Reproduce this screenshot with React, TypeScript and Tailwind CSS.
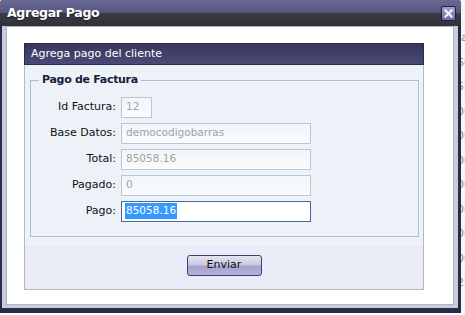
import React from 'react';

const font = { fontFamily: '"DejaVu Sans", Verdana, sans-serif' };

function ReadonlyField({ value, width }: { value: string; width: string }) {
  return (
    <div
      className={`${width} h-[21px] border border-[#b9c8d8] bg-[linear-gradient(to_bottom,#f2f5f8,#fafbfd)] px-[4px] flex items-center text-[10.5px] text-[#a3a3a3]`}
    >
      {value}
    </div>
  );
}

function Row({ label, children }: { label: string; children: React.ReactNode }) {
  return (
    <div className="flex items-center gap-[5px] h-[21px]">
      <div className="w-[84px] text-right text-[11px] text-[#111]">{label}</div>
      {children}
    </div>
  );
}

export default function App() {
  return (
    <div className="w-[465px] h-[315px] bg-white flex overflow-hidden" style={font}>
      {/* Dialog window */}
      <div className="w-[461px] h-[313px] flex flex-col bg-[#2a2a4e] rounded-t-[3px] overflow-hidden">
        {/* Title bar */}
        <div className="h-[26px] shrink-0 flex items-center justify-between pl-[7px] pr-[5px] bg-[linear-gradient(to_bottom,#6a6a96_0%,#55557f_50%,#3b3b44_52%,#313139_100%)]">
          <span className="text-white font-bold text-[12.5px] tracking-[-0.3px] [text-shadow:0_1px_1px_#1a1a2a]">
            Agregar Pago
          </span>
          <div className="w-[15px] h-[15px] rounded-[2px] border border-[#1f1f45] bg-[linear-gradient(to_bottom,#a2a2cc,#6c6ca2)] flex items-center justify-center">
            <svg width="9" height="9" viewBox="0 0 9 9">
              <path d="M1.5 1.5 L7.5 7.5 M7.5 1.5 L1.5 7.5" stroke="#f4f4fa" strokeWidth="2.2" strokeLinecap="square" />
            </svg>
          </div>
        </div>

        {/* Window body frame */}
        <div className="flex-1 flex flex-col pl-[2px] pr-[3px] pb-[5px]">
          <div className="flex-1 bg-[#c9cdd9] pl-[4px] pr-[4px] pb-[3px] flex">
            <div className="flex-1 bg-white border border-[#b0b4c2] pl-[17px] pt-[16px]">
              {/* Inner panel */}
              <div className="w-[400px] flex flex-col">
                <div className="h-[22px] flex items-center pl-[6px] bg-[linear-gradient(to_bottom,#36365e,#4a4a76)] border border-[#2a2a50] text-white text-[11px]">
                  Agrega pago del cliente
                </div>
                <div className="bg-[#edf1f8] border border-t-0 border-[#b3b7c7] flex flex-col">
                  <div className="pl-[5px] pr-[4px] pt-[7px] pb-[9px]">
                    <fieldset className="border border-[#b3bccd] px-[1px] pb-[14px]">
                      <legend className="ml-[7px] px-[3px] text-[11px] font-bold tracking-[-0.3px] text-[#15203a]">
                        Pago de Factura
                      </legend>
                      <div className="flex flex-col gap-[5px] pt-[8px]">
                        <Row label="Id Factura:">
                          <ReadonlyField value="12" width="w-[31px]" />
                        </Row>
                        <Row label="Base Datos:">
                          <ReadonlyField value="democodigobarras" width="w-[190px]" />
                        </Row>
                        <Row label="Total:">
                          <ReadonlyField value="85058.16" width="w-[190px]" />
                        </Row>
                        <Row label="Pagado:">
                          <ReadonlyField value="0" width="w-[190px]" />
                        </Row>
                        <Row label="Pago:">
                          <div className="w-[190px] h-[21px] border border-[#46699a] bg-white px-[3px] flex items-center text-[10.5px]">
                            <span className="bg-[#3399ff] text-white px-[1px]">85058.16</span>
                          </div>
                        </Row>
                      </div>
                    </fieldset>
                  </div>
                  <div className="bg-[#e9ecf6] flex justify-center pt-[9px] pb-[13px]">
                    <button className="w-[75px] h-[21px] rounded-[3px] border border-[#3f3f72] bg-[linear-gradient(to_bottom,#e6e6f2_0%,#c8c8e0_45%,#a4a4cc_55%,#b4b4d8_100%)] text-[11px] text-[#111]">
                      Enviar
                    </button>
                  </div>
                </div>
              </div>
            </div>
          </div>
        </div>
      </div>

      {/* Background list peeking out at right */}
      <div className="w-[4px] h-[315px] bg-[#f6f6f6] overflow-hidden flex flex-col pt-[30px] gap-[8px] text-[11px] text-[#8a8a8a]">
        <div className="-ml-[4px]">ta</div>
        <div className="-ml-[4px]">66</div>
        <div className="-ml-[4px]">55</div>
        <div className="-ml-[4px]">00</div>
        <div className="-ml-[4px]">00</div>
        <div className="-ml-[4px]">00</div>
        <div className="-ml-[4px]">00</div>
        <div className="-ml-[4px]">00</div>
        <div className="-ml-[4px]">00</div>
        <div className="-ml-[4px]">00</div>
        <div className="-ml-[4px]">22</div>
      </div>
    </div>
  );
}
